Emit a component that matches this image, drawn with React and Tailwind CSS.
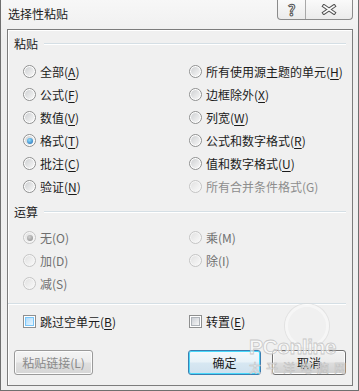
import React from "react";
import clsx from "clsx";

function Radio({ checked, disabled }) {
  return (
    <span
      className={clsx(
        "flex h-[13px] w-[13px] shrink-0 items-center justify-center rounded-full border",
        disabled ? "border-[#c4c4c4] bg-[#f6f6f6]" : "border-[#8e8f8f] bg-white"
      )}
    >
      <span
        className={clsx(
          "flex h-[9px] w-[9px] items-center justify-center rounded-full",
          disabled
            ? "bg-[linear-gradient(135deg,#e2e2e2,#f8f8f8)]"
            : "bg-[linear-gradient(135deg,#cfd1d3,#f7f7f7)]"
        )}
      >
        {checked && (
          <span
            className={clsx(
              "h-[6px] w-[6px] rounded-full",
              disabled
                ? "bg-[radial-gradient(circle_at_40%_35%,#d0d0d0,#8a8a8a)]"
                : "bg-[radial-gradient(circle_at_40%_35%,#8fe0ff,#1b62ae)]"
            )}
          />
        )}
      </span>
    </span>
  );
}

function Option({ label, hot, checked }) {
  return (
    <div className="flex h-[23px] items-center gap-[4px]">
      <Radio checked={checked} />
      <span className="text-[12px] leading-[16px] text-[#1b1b1b]">
        {label}(<span className="underline underline-offset-2">{hot}</span>)
      </span>
    </div>
  );
}

function PlainOption({ text, checked, muted }) {
  return (
    <div className="flex h-[23px] items-center gap-[4px]">
      <Radio checked={checked} disabled />
      <span
        className={clsx(
          "text-[12px] leading-[16px]",
          muted ? "text-[#6f6f6f]" : "text-[#8d8d8d]"
        )}
      >
        {text}
      </span>
    </div>
  );
}

function Check({ label, hot, hover }) {
  return (
    <div className="flex h-[23px] items-center gap-[4px]">
      <span className="flex h-[13px] w-[13px] shrink-0 items-center justify-center border border-[#8e8f8f] bg-white">
        <span
          className={clsx(
            "h-[9px] w-[9px] border",
            hover
              ? "border-[#79c6f9] bg-[linear-gradient(135deg,#b1dcfb,#e9f6fe)]"
              : "border-[#aeb3b9] bg-[linear-gradient(135deg,#cbcfd5,#f6f6f6)]"
          )}
        />
      </span>
      <span className="text-[12px] leading-[16px] text-[#1b1b1b]">
        {label}(<span className="underline underline-offset-2">{hot}</span>)
      </span>
    </div>
  );
}

function GroupLabel({ text }) {
  return (
    <div className="flex h-[16px] items-center px-[6px]">
      <span className="text-[12px] leading-[16px] text-[#1b1b1b]">{text}</span>
      <div className="ml-[6px] flex flex-1 flex-col">
        <div className="h-px bg-[#d5dfe5]" />
        <div className="h-px bg-white" />
      </div>
    </div>
  );
}

export default function App() {
  return (
    <div className="relative h-[391px] w-[359px] overflow-hidden border-x border-b border-[#6f6f6f] bg-[linear-gradient(#f7f7f7,#eeeeee_40px,#efefef)] font-['Noto_Sans_CJK_SC','Microsoft_YaHei',sans-serif]">
      {/* title bar */}
      <div className="flex h-[29px]">
        <div className="flex items-center pl-[7px] pb-[1px] text-[12px] leading-[16px] text-[#1b1b1b]">
          选择性粘贴
        </div>
        <div className="ml-auto mr-[5px] flex h-[20px] w-[76px] self-start overflow-hidden rounded-b-[4px] border border-t-0 border-[#8b8b8b] bg-[linear-gradient(#fafafa,#ebebeb)]">
          <div className="flex w-[28px] items-center justify-center border-r border-[#a8a8a8]">
            <span className="text-[15px] font-bold leading-[16px] text-white [-webkit-text-stroke:1px_#555]">
              ?
            </span>
          </div>
          <div className="flex flex-1 items-center justify-center">
            <svg width="16" height="11" viewBox="0 0 16 11">
              <g strokeLinecap="square">
                <line x1="3" y1="2" x2="13" y2="9" stroke="#555" strokeWidth="3.6" />
                <line x1="13" y1="2" x2="3" y2="9" stroke="#555" strokeWidth="3.6" />
                <line x1="3" y1="2" x2="13" y2="9" stroke="#fff" strokeWidth="1.6" />
                <line x1="13" y1="2" x2="3" y2="9" stroke="#fff" strokeWidth="1.6" />
              </g>
            </svg>
          </div>
        </div>
      </div>

      {/* client area */}
      <div className="ml-[6px] flex h-[357px] w-[346px] flex-col border border-[#7c7c7c] bg-[#f0f0f0] shadow-[inset_1px_1px_0_#ffffff]">
        <div className="mt-[6px]">
          <GroupLabel text="粘贴" />
        </div>
        <div className="mt-[8px] grid grid-cols-[166px_1fr] pl-[15px]">
          <Option label="全部" hot="A" />
          <Option label="所有使用源主题的单元" hot="H" />
          <Option label="公式" hot="F" />
          <Option label="边框除外" hot="X" />
          <Option label="数值" hot="V" />
          <Option label="列宽" hot="W" />
          <Option label="格式" hot="T" checked />
          <Option label="公式和数字格式" hot="R" />
          <Option label="批注" hot="C" />
          <Option label="值和数字格式" hot="U" />
          <Option label="验证" hot="N" />
          <PlainOption text="所有合并条件格式(G)" />
        </div>

        <div className="mt-[6px]">
          <GroupLabel text="运算" />
        </div>
        <div className="mt-[6px] grid grid-cols-[166px_1fr] pl-[15px]">
          <PlainOption text="无(O)" checked muted />
          <PlainOption text="乘(M)" muted />
          <PlainOption text="加(D)" muted />
          <PlainOption text="除(I)" muted />
          <PlainOption text="减(S)" muted />
        </div>

        <div className="mt-[8px] mr-[6px] flex flex-col">
          <div className="h-px bg-[#d5dfe5]" />
          <div className="h-px bg-white" />
        </div>

        <div className="mt-[5px] grid grid-cols-[166px_1fr] pl-[15px]">
          <Check label="跳过空单元" hot="B" hover />
          <Check label="转置" hot="E" />
        </div>

        <div className="mt-[17px] flex px-[6px]">
          <button className="h-[25px] w-[79px] rounded-[3px] border border-[#9a9a9a] bg-[linear-gradient(#f4f4f4,#ececec_48%,#dfdfdf_52%,#d6d6d6)] text-[12px] leading-[16px] text-[#8a8a8a] shadow-[inset_0_0_0_1px_#fcfcfc]">
            粘贴链接(L)
          </button>
          <button className="ml-auto h-[25px] w-[73px] rounded-[3px] border border-[#3c7fb1] bg-[linear-gradient(#f4f9fc,#e8f2f8_48%,#d7e7f2_52%,#cfe1ee)] text-[12px] leading-[16px] text-[#1b1b1b] shadow-[inset_0_0_0_1px_#48d8fb]">
            确定
          </button>
          <button className="ml-[11px] h-[25px] w-[74px] rounded-[3px] border border-[#707070] bg-[linear-gradient(#f2f2f2,#ebebeb_48%,#dddddd_52%,#cfcfcf)] text-[12px] leading-[16px] text-[#1b1b1b] shadow-[inset_0_0_0_1px_#fcfcfc]">
            取消
          </button>
        </div>
      </div>

      {/* watermark */}
      <div className="pointer-events-none absolute left-[284px] top-[304px] h-[44px] w-[44px] rounded-full border-[3px] border-white/70 opacity-60 shadow-[0_0_0_1px_#d8d8d8]" />
      <span className="pointer-events-none absolute left-[248px] top-[336px] font-['Liberation_Sans',sans-serif] text-[21px] font-bold leading-[22px] tracking-[-0.5px] text-white/60 [-webkit-text-stroke:0.8px_#c8c8c8]">
        PConline
      </span>
      <span className="pointer-events-none absolute left-[248px] top-[361px] text-[12px] leading-[14px] tracking-[5px] text-white/60 [-webkit-text-stroke:0.5px_#bdbdbd]">
        太平洋电脑网
      </span>
    </div>
  );
}
